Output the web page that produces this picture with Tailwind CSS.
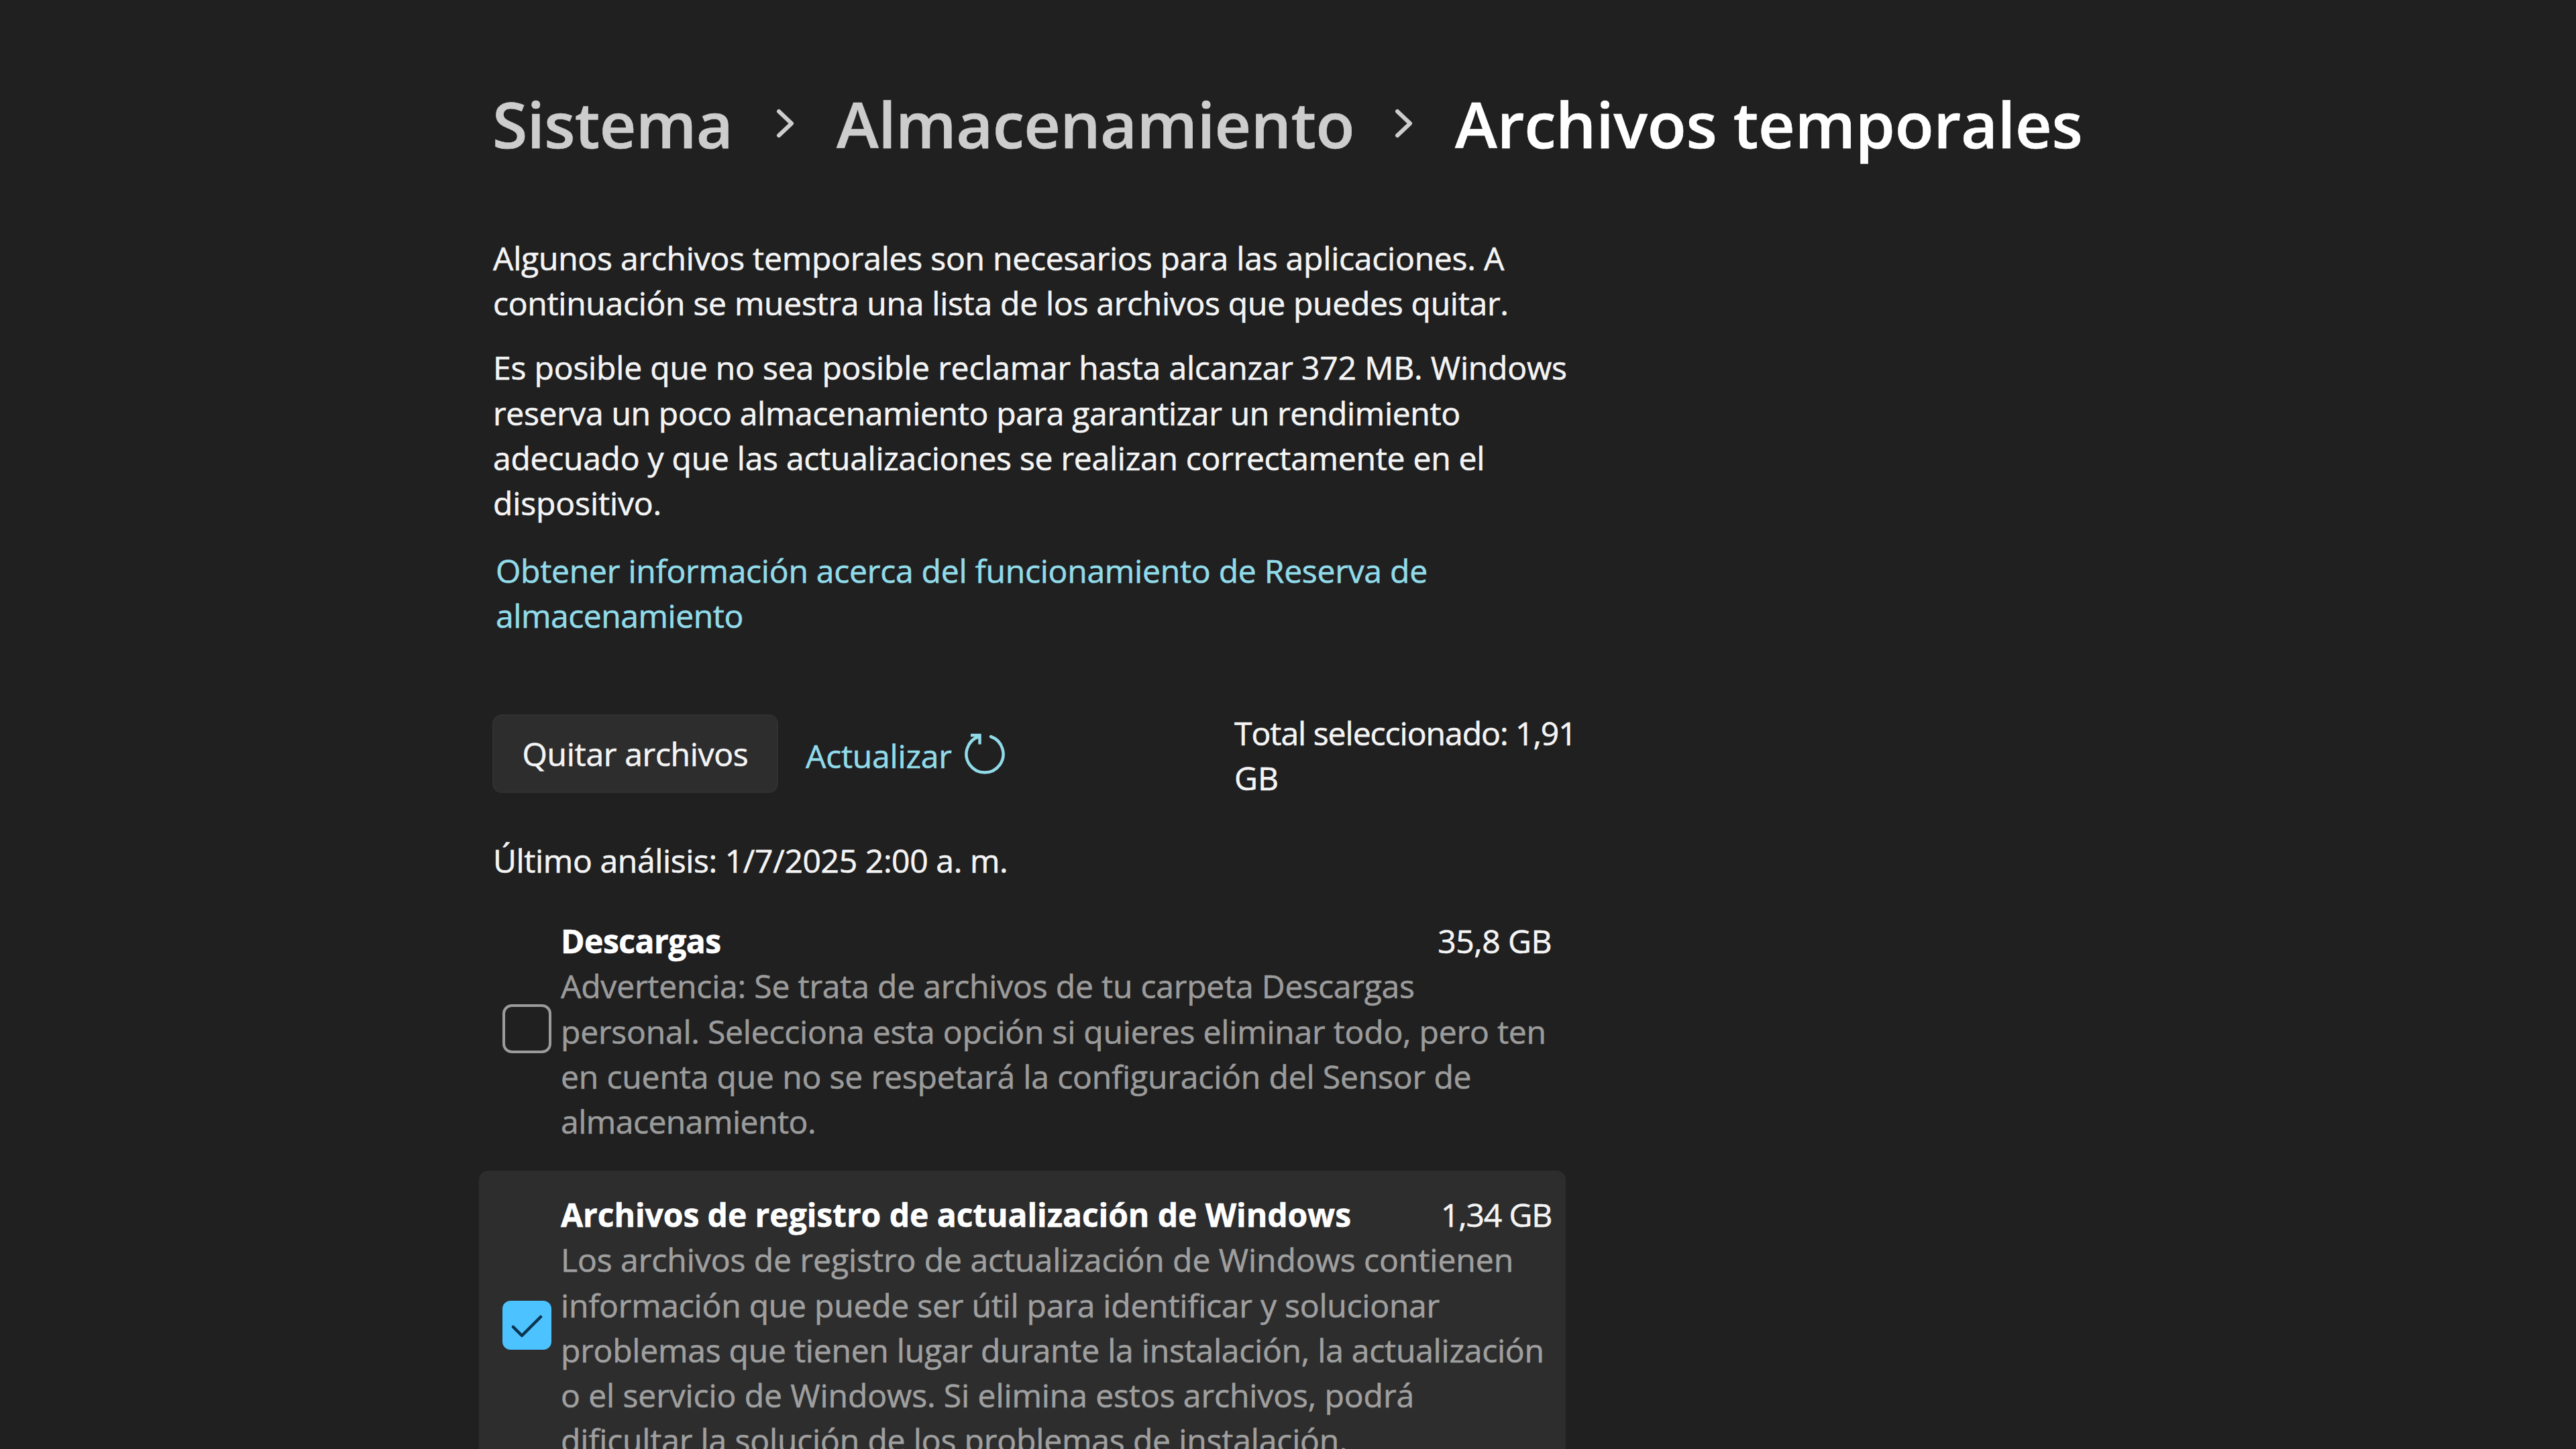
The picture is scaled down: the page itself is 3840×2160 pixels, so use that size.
<!DOCTYPE html>
<html lang="es">
<head>
    <meta charset="UTF-8">
    <meta name="viewport" content="width=device-width, initial-scale=1.0">
    <title>Archivos temporales</title>
    <script src="https://cdn.jsdelivr.net/npm/@tailwindcss/browser@4"></script>
    <style>
        body {
            font-family: 'Open Sans', 'Noto Sans', sans-serif;
            -webkit-text-stroke: 0.6px currentColor;
        }
    </style>
</head>
<body class="bg-[#202020] text-[#f4f4f4] w-full h-screen overflow-hidden">
    <main class="ml-[714px] w-[1620px] pt-[119px] text-[48px] leading-[67.2px] whitespace-nowrap">
        <!-- Breadcrumb -->
        <nav class="flex items-center ml-[20px] text-[95px] leading-[130px] font-semibold text-[#cdcdcd]">
            <a class="w-[423px] shrink-0 tracking-[-0.7px]">Sistema</a>
            <svg class="w-[28px] h-[44px] shrink-0" viewBox="0 0 28 44" fill="none" stroke="currentColor" stroke-width="6" stroke-linecap="round" stroke-linejoin="round">
                <path d="M4 4 L23 22 L4 40"/>
            </svg>
            <a class="w-[894px] shrink-0 pl-[62px] tracking-[-0.6px]">Almacenamiento</a>
            <svg class="w-[28px] h-[44px] shrink-0" viewBox="0 0 28 44" fill="none" stroke="currentColor" stroke-width="6" stroke-linecap="round" stroke-linejoin="round">
                <path d="M4 4 L23 22 L4 40"/>
            </svg>
            <h1 class="shrink-0 pl-[62px] text-white tracking-[-0.3px]">Archivos temporales</h1>
        </nav>

        <!-- Description -->
        <section class="ml-[21px] mt-[102px]">
            <p>
                <span class="block tracking-[-0.21px]">Algunos archivos temporales son necesarios para las aplicaciones. A</span>
                <span class="block tracking-[-0.27px]">continuación se muestra una lista de los archivos que puedes quitar.</span>
            </p>
            <p class="mt-[29px]">
                <span class="block tracking-[-0.17px]">Es posible que no sea posible reclamar hasta alcanzar 372 MB. Windows</span>
                <span class="block tracking-[-0.33px]">reserva un poco almacenamiento para garantizar un rendimiento</span>
                <span class="block tracking-[-0.25px]">adecuado y que las actualizaciones se realizan correctamente en el</span>
                <span class="block tracking-[-0.1px]">dispositivo.</span>
            </p>
            <a class="block mt-[34px] ml-[4px] text-[#91dbe9]">
                <span class="block tracking-[-0.23px]">Obtener información acerca del funcionamiento de Reserva de</span>
                <span class="block tracking-[-0.42px]">almacenamiento</span>
            </a>
        </section>

        <!-- Actions -->
        <section class="flex items-center ml-[20px] mt-[107px]">
            <button class="w-[426px] h-[117px] shrink-0 mb-[5px] rounded-[14px] bg-[#2d2d2d] border-2 border-[#313131] tracking-[-0.3px]">Quitar archivos</button>
            <a class="flex items-center w-[680px] shrink-0 pl-[41px] text-[#91dbe9]">
                <span class="tracking-[-0.2px] pt-[2px]">Actualizar</span>
                <svg class="w-[64px] h-[64px] ml-[17px] mb-[7px]" viewBox="0 0 64 64" fill="none" stroke="currentColor" stroke-width="4.5">
                    <path d="M41 8 A27.500 27.500 0 1 1 23 8" stroke-linecap="round"/>
                    <path d="M11 6 H24.500 V19.500"/>
                </svg>
            </a>
            <p class="shrink-0">
                <span class="block tracking-[-1px]">Total seleccionado: 1,91</span>
                <span class="block">GB</span>
            </p>
        </section>

        <p class="ml-[21px] mt-[56px] tracking-[-0.37px]">Último análisis: 1/7/2025 2:00 a. m.</p>

        <!-- File categories -->
        <ul class="mt-[21px] flex flex-col gap-[14px]">
            <li class="flex items-center gap-[14px] pl-[35px] pr-[20px] pt-[32px] pb-[26px] rounded-[14px]">
                <span class="w-[73px] h-[73px] shrink-0 mb-[7px] rounded-[14px] border-[4px] border-[#9b9b9b]"></span>
                <div class="flex-1">
                    <div class="flex justify-between">
                        <h2 class="font-bold text-white tracking-[-0.5px]">Descargas</h2>
                        <span class="tracking-[-0.5px] pr-[1px]">35,8 GB</span>
                    </div>
                    <p class="text-[#9b9b9b]">
                        <span class="block tracking-[-0.18px]">Advertencia: Se trata de archivos de tu carpeta Descargas</span>
                        <span class="block tracking-[-0.2px]">personal. Selecciona esta opción si quieres eliminar todo, pero ten</span>
                        <span class="block tracking-[-0.14px]">en cuenta que no se respetará la configuración del Sensor de</span>
                        <span class="block tracking-[-0.5px]">almacenamiento.</span>
                    </p>
                </div>
            </li>
            <li class="flex items-center gap-[14px] pl-[35px] pr-[20px] pt-[32px] pb-[26px] rounded-[14px] bg-[#2d2d2d]">
                <span class="w-[73px] h-[73px] shrink-0 mb-[7px] rounded-[12px] bg-[#4cc2ff]">
                    <svg class="w-[73px] h-[73px]" viewBox="0 0 73 73" fill="none" stroke="#0b3550" stroke-width="4.5" stroke-linecap="round" stroke-linejoin="round">
                        <path d="M16 39 L29 52 L57 24"/>
                    </svg>
                </span>
                <div class="flex-1">
                    <div class="flex justify-between">
                        <h2 class="font-bold text-white tracking-[-0.06px]">Archivos de registro de actualización de Windows</h2>
                        <span class="tracking-[-1.15px] pr-[1px]">1,34 GB</span>
                    </div>
                    <p class="text-[#9f9f9f]">
                        <span class="block tracking-[-0.04px]">Los archivos de registro de actualización de Windows contienen</span>
                        <span class="block tracking-[-0.21px]">información que puede ser útil para identificar y solucionar</span>
                        <span class="block tracking-[-0.22px]">problemas que tienen lugar durante la instalación, la actualización</span>
                        <span class="block tracking-[-0.08px]">o el servicio de Windows. Si elimina estos archivos, podrá</span>
                        <span class="block tracking-[-0.14px]">dificultar la solución de los problemas de instalación.</span>
                    </p>
                </div>
            </li>
        </ul>
    </main>
</body>
</html>
